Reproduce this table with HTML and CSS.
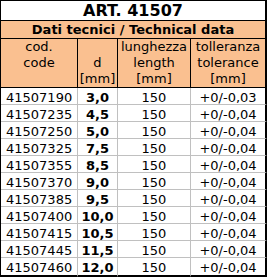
FILE: index.html
```html
<!DOCTYPE html>
<html lang="it">
<head>
<meta charset="utf-8">
<title>ART. 41507</title>
<link rel="stylesheet" href="styles.css">
</head>
<body>
<div class="sheet">
  <div class="cell title last-col">ART. 41507</div>
  <div class="cell subtitle last-col">Dati tecnici / Technical data</div>

  <div class="cell head"><span>cod.</span><span>code</span></div>
  <div class="cell head head-d"><span>d</span><span>[mm]</span></div>
  <div class="cell head"><span>lunghezza</span><span>length</span><span>[mm]</span></div>
  <div class="cell head last-col"><span>tolleranza</span><span>tolerance</span><span>[mm]</span></div>

  <div class="cell code">41507190</div><div class="cell dia">3,0</div><div class="cell num">150</div><div class="cell num last-col">+0/-0,03</div>
  <div class="cell code">41507235</div><div class="cell dia">4,5</div><div class="cell num">150</div><div class="cell num last-col">+0/-0,04</div>
  <div class="cell code">41507250</div><div class="cell dia">5,0</div><div class="cell num">150</div><div class="cell num last-col">+0/-0,04</div>
  <div class="cell code">41507325</div><div class="cell dia">7,5</div><div class="cell num">150</div><div class="cell num last-col">+0/-0,04</div>
  <div class="cell code">41507355</div><div class="cell dia">8,5</div><div class="cell num">150</div><div class="cell num last-col">+0/-0,04</div>
  <div class="cell code">41507370</div><div class="cell dia">9,0</div><div class="cell num">150</div><div class="cell num last-col">+0/-0,04</div>
  <div class="cell code">41507385</div><div class="cell dia">9,5</div><div class="cell num">150</div><div class="cell num last-col">+0/-0,04</div>
  <div class="cell code">41507400</div><div class="cell dia">10,0</div><div class="cell num">150</div><div class="cell num last-col">+0/-0,04</div>
  <div class="cell code">41507415</div><div class="cell dia">10,5</div><div class="cell num">150</div><div class="cell num last-col">+0/-0,04</div>
  <div class="cell code">41507445</div><div class="cell dia">11,5</div><div class="cell num">150</div><div class="cell num last-col">+0/-0,04</div>
  <div class="cell code last-row">41507460</div><div class="cell dia last-row">12,0</div><div class="cell num last-row">150</div><div class="cell num last-col last-row">+0/-0,04</div>
</div>
</body>
</html>
```

FILE: styles.css
```css
* { box-sizing: border-box; }
html, body { margin: 0; padding: 0; background: #fff; }
body {
  font-family: "DejaVu Sans", Verdana, sans-serif;
  font-size: 13px;
  color: #000;
}
.sheet {
  display: grid;
  grid-template-columns: 77px 40px 73px 76px;
  width: 267px;
  border-left: 1px solid #000;
  border-top: 1px solid #000;
}
.cell {
  border-right: 1px solid #c0c0c0;
  border-bottom: 1px solid #c0c0c0;
  height: 17px;
  padding-top: 2px;
  line-height: 15px;
  white-space: nowrap;
  overflow: hidden;
}
.last-col { border-right: 2px solid #000; }
.last-row { border-bottom: 2px solid #000; height: 19px; }
.title {
  grid-column: 1 / -1;
  height: 20px;
  padding-top: 0;
  line-height: 19px;
  font-size: 16px;
  font-weight: bold;
  text-align: center;
  border-bottom: 1px solid #000;
}
.subtitle {
  grid-column: 1 / -1;
  height: 18px;
  padding-top: 0;
  line-height: 17px;
  font-weight: bold;
  text-align: center;
  background: #fac090;
  border-bottom: 1px solid #000;
}
.head {
  height: 49px;
  padding-top: 0;
  background: #fac090;
  border-right-color: #000;
  border-bottom: 1px solid #000;
  display: flex;
  flex-direction: column;
  justify-content: flex-start;
  align-items: center;
  line-height: 16px;
  overflow: visible;
}
.head-d { padding-top: 16px; }
.head.last-col { border-right: 2px solid #000; }
.code { padding-left: 5px; }
.dia { font-weight: bold; text-align: center; }
.num { text-align: center; }
```
